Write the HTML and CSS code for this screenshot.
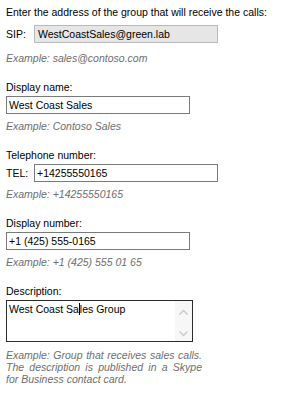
FILE: index.html
```html
<!DOCTYPE html>
<html lang="en">
  <head>
    <meta charset="UTF-8" />
    <title>Group</title>
    <link rel="stylesheet" href="styles.css">
  </head>
  <body>
    <div class="form">
      <p class="intro">Enter the address of the group that will receive the calls:</p>

      <div class="row row-sip">
        <span class="prefix">SIP:</span>
        <div class="box box-readonly">WestCoastSales@green.lab</div>
      </div>
      <p class="hint hint-first">Example: sales@contoso.com</p>

      <div class="field">
        <label class="label">Display name:</label>
        <div class="box">West Coast Sales</div>
        <p class="hint">Example: Contoso Sales</p>
      </div>

      <div class="field">
        <label class="label">Telephone number:</label>
        <div class="row">
          <span class="prefix">TEL:</span>
          <div class="box">+14255550165</div>
        </div>
        <p class="hint">Example: +14255550165</p>
      </div>

      <div class="field">
        <label class="label">Display number:</label>
        <div class="box">+1 (425) 555-0165</div>
        <p class="hint">Example: +1 (425) 555 01 65</p>
      </div>

      <div class="field">
        <label class="label">Description:</label>
        <div class="textbox">
          <div class="textbox-text">West Coast Sa<span class="caret"></span>les Group</div>
          <div class="scroller">
            <svg width="9" height="6" viewBox="0 0 9 6"><path d="M0.5 5.5 L4.5 1.5 L8.5 5.5" fill="none" stroke="#c9c9c9" stroke-width="1.4"/></svg>
            <svg width="9" height="6" viewBox="0 0 9 6"><path d="M0.5 0.5 L4.5 4.5 L8.5 0.5" fill="none" stroke="#c9c9c9" stroke-width="1.4"/></svg>
          </div>
        </div>
        <p class="hint hint-long">Example: Group that receives sales calls. The description is published in a Skype for Business contact card.</p>
      </div>
    </div>
  </body>
</html>
```

FILE: styles.css
```css
body {
  margin: 0;
  background-color: #fff;
  color: #000;
  font-family: "Liberation Sans", Arial, sans-serif;
  font-size: 10.5px;
}

.form {
  padding: 5px 6px;
}

p {
  margin: 0;
}

.intro {
  line-height: 14px;
}

.row {
  display: flex;
  align-items: center;
}

.row-sip {
  margin-top: 6px;
}

.prefix {
  width: 28px;
  line-height: 14px;
}

.box {
  box-sizing: border-box;
  width: 184px;
  height: 18px;
  padding: 0 2px;
  line-height: 16px;
  border: 1px solid #7a7a7a;
  background-color: #fff;
  white-space: nowrap;
}

.box-readonly {
  padding-left: 3px;
  border-color: #b9b9b9;
  background-color: #e6e6e6;
}

.hint {
  margin-top: 5px;
  line-height: 14px;
  color: #6e6e6e;
  font-style: italic;
}

.hint-first {
  margin-top: 8px;
}

.field {
  margin-top: 15px;
}

.label {
  display: block;
  line-height: 14px;
  margin-bottom: 2px;
}

/* Zone de description, avec sa barre de defilement */
.textbox {
  box-sizing: border-box;
  display: flex;
  width: 187px;
  height: 42px;
  border: 1px solid #2b2b2b;
  background-color: #fff;
}

.textbox-text {
  flex: 1;
  padding: 1px 2px;
  line-height: 14px;
}

.caret {
  display: inline-block;
  width: 1px;
  height: 12px;
  margin: 0 0 -2px;
  background-color: #000;
}

.scroller {
  width: 17px;
  display: flex;
  flex-direction: column;
  justify-content: space-between;
  align-items: center;
  padding: 8px 0 4px;
  background-color: #f7f7f7;
}

.hint-long {
  width: 196px;
  margin-top: 7px;
  line-height: 12px;
  text-align: justify;
}
```
